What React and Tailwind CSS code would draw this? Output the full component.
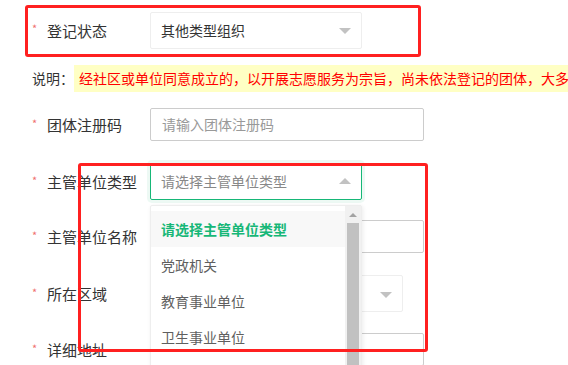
import React from 'react'

const FONT = { fontFamily: '"Noto Sans CJK SC", "Noto Sans", sans-serif' }

function Star() {
  return <span className="w-[17px] pl-[2px] text-[11px] leading-none text-[#f07070] -mt-[3px]">*</span>
}

function Row({ label, h, children }) {
  return (
    <div className={`flex items-center pl-[30px] ${h}`}>
      <Star />
      <span className="w-[103px] text-[15px] leading-none text-[#333]">{label}</span>
      {children}
    </div>
  )
}

function Arrow({ up }) {
  return up ? (
    <span className="absolute right-[10px] top-1/2 -mt-[4px] h-0 w-0 border-x-[6px] border-b-[6px] border-x-transparent border-b-[#c2c2c2]" />
  ) : (
    <span className="absolute right-[10px] top-1/2 -mt-[2px] h-0 w-0 border-x-[6px] border-t-[6px] border-x-transparent border-t-[#c2c2c2]" />
  )
}

const OPTIONS = ['党政机关', '教育事业单位', '卫生事业单位']

export default function App() {
  return (
    <div className="relative h-[365px] w-full overflow-hidden bg-white" style={FONT}>
      <div className="pt-[11px]">
        {/* 登记状态 */}
        <Row label="登记状态" h="h-[38px]">
          <div className="relative flex h-[37px] w-[212px] items-center rounded-[2px] border border-[#eee] pl-[10px] text-[14px] text-[#333]">
            其他类型组织
            <Arrow />
          </div>
        </Row>

        {/* 说明 */}
        <div className="mt-[16px] flex h-[27px] items-center whitespace-nowrap pl-[32px] text-[14px]">
          <span className="text-[#333]">说明：</span>
          <span className="flex h-full items-center bg-[#ffffc4] pl-[5px] pr-[40px] text-[#ff0000]">
            经社区或单位同意成立的，以开展志愿服务为宗旨，尚未依法登记的团体，大多
          </span>
        </div>

        {/* 团体注册码 */}
        <div className="mt-[16px]">
          <Row label="团体注册码" h="h-[33px]">
            <div className="flex h-[33px] w-[274px] items-center rounded-[2px] border border-[#ccc] pl-[11px] text-[14px] text-[#999]">
              请输入团体注册码
            </div>
          </Row>
        </div>

        {/* 主管单位类型 */}
        <div className="mt-[22px]">
          <Row label="主管单位类型" h="h-[37px]">
            <div className="relative">
              <div className="relative flex h-[37px] w-[212px] items-center rounded-[2px] border border-[#16b777] pl-[10px] text-[14px] text-[#888] shadow-[0_0_0_3px_rgba(22,183,119,0.08)]">
                请选择主管单位类型
                <Arrow up />
              </div>
              {/* dropdown */}
              <div className="absolute left-0 top-[42px] z-20 flex h-[300px] w-[212px] rounded-[2px] border border-[#eee] bg-white shadow-[1px_1px_4px_rgba(0,0,0,0.08)]">
                <div className="flex-1 py-[5px]">
                  <div className="h-[36px] bg-[#f8f8f8] px-[10px] text-[14px] font-bold leading-[36px] text-[#16b777]">
                    请选择主管单位类型
                  </div>
                  {OPTIONS.map((o) => (
                    <div key={o} className="h-[36px] px-[10px] text-[14px] leading-[36px] text-[#5f5f5f]">
                      {o}
                    </div>
                  ))}
                </div>
                <div className="flex w-[16px] flex-col bg-[#f1f1f1]">
                  <div className="flex h-[17px] items-center justify-center">
                    <span className="h-0 w-0 border-x-[4px] border-b-[4px] border-x-transparent border-b-[#a3a3a3]" />
                  </div>
                  <div className="mx-[2px] flex-1 bg-[#c1c1c1]" />
                </div>
              </div>
            </div>
          </Row>
        </div>

        {/* 主管单位名称 */}
        <div className="mt-[20px]">
          <Row label="主管单位名称" h="h-[33px]">
            <div className="h-[33px] w-[274px] rounded-[2px] border border-[#ccc]" />
          </Row>
        </div>

        {/* 所在区域 */}
        <div className="mt-[22px]">
          <Row label="所在区域" h="h-[37px]">
            <div className="relative h-[37px] w-[253px] rounded-[2px] border border-[#eee]">
              <Arrow />
            </div>
          </Row>
        </div>

        {/* 详细地址 */}
        <div className="mt-[21px]">
          <Row label="详细地址" h="h-[33px]">
            <div className="h-[33px] w-[274px] rounded-[2px] border border-[#ccc]" />
          </Row>
        </div>
      </div>

      {/* annotation boxes */}
      <div className="pointer-events-none absolute left-[25px] top-[5px] z-30 h-[52px] w-[396px] rounded-[3px] border-[3px] border-[#ff2020]" />
      <div className="pointer-events-none absolute left-[78px] top-[163px] z-30 h-[189px] w-[350px] rounded-[3px] border-[3px] border-[#ff2020]" />
    </div>
  )
}
